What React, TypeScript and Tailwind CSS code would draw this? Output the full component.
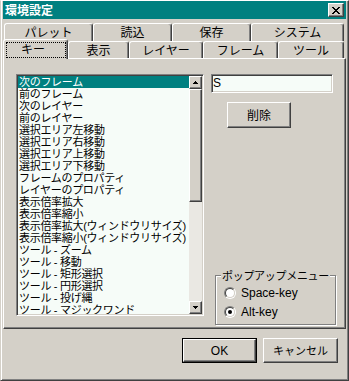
const raised =
  "border border-t-white border-l-white border-r-[#404040] border-b-[#404040] shadow-[inset_-1px_-1px_0_#808080] bg-[#d4d0c8]"
const sunken =
  "border border-t-[#808080] border-l-[#808080] border-r-white border-b-white shadow-[inset_1px_1px_0_#404040,inset_-1px_-1px_0_#d4d0c8] p-[1px]"

const items = [
  "次のフレーム",
  "前のフレーム",
  "次のレイヤー",
  "前のレイヤー",
  "選択エリア左移動",
  "選択エリア右移動",
  "選択エリア上移動",
  "選択エリア下移動",
  "フレームのプロパティ",
  "レイヤーのプロパティ",
  "表示倍率拡大",
  "表示倍率縮小",
  "表示倍率拡大(ウィンドウリサイズ)",
  "表示倍率縮小(ウィンドウリサイズ)",
  "ツール - ズーム",
  "ツール - 移動",
  "ツール - 矩形選択",
  "ツール - 円形選択",
  "ツール - 投げ縄",
  "ツール - マジックワンド",
]

const CloseGlyph = () => (
  <svg width="8" height="7" viewBox="0 0 8 7" shapeRendering="crispEdges">
    <rect x="0" y="0" width="2" height="1" />
    <rect x="6" y="0" width="2" height="1" />
    <rect x="1" y="1" width="2" height="1" />
    <rect x="5" y="1" width="2" height="1" />
    <rect x="2" y="2" width="4" height="1" />
    <rect x="3" y="3" width="2" height="1" />
    <rect x="2" y="4" width="4" height="1" />
    <rect x="1" y="5" width="2" height="1" />
    <rect x="5" y="5" width="2" height="1" />
    <rect x="0" y="6" width="2" height="1" />
    <rect x="6" y="6" width="2" height="1" />
  </svg>
)

const Arrow = ({ down }: { down?: boolean }) => (
  <svg width="5" height="3" viewBox="0 0 5 3" shapeRendering="crispEdges">
    {down ? (
      <>
        <rect x="0" y="0" width="5" height="1" />
        <rect x="1" y="1" width="3" height="1" />
        <rect x="2" y="2" width="1" height="1" />
      </>
    ) : (
      <>
        <rect x="2" y="0" width="1" height="1" />
        <rect x="1" y="1" width="3" height="1" />
        <rect x="0" y="2" width="5" height="1" />
      </>
    )}
  </svg>
)

const Radio = ({ checked }: { checked?: boolean }) => (
  <div className="w-[12px] h-[12px] rounded-full border border-t-[#808080] border-l-[#808080] border-r-white border-b-white">
    <div className="w-full h-full rounded-full border border-t-[#404040] border-l-[#404040] border-r-[#d4d0c8] border-b-[#d4d0c8] bg-white flex items-center justify-center">
      {checked && <div className="w-[4px] h-[4px] rounded-full bg-black" />}
    </div>
  </div>
)

const Tab = ({ label, w, h }: { label: string; w: string; h: string }) => (
  <div
    className={`${w} ${h} border-t border-l border-t-white border-l-white border-r border-r-[#404040] shadow-[inset_-1px_0_0_#808080] rounded-t-[3px] flex items-center justify-center text-[12px] leading-none pt-[1px]`}
  >
    {label}
  </div>
)

export default function App() {
  return (
    <div className="w-[349px] h-[381px] bg-[#d4d0c8] text-black font-['Liberation_Sans','Noto_Sans_CJK_JP',sans-serif] border border-l-[#d4d0c8] border-t-white border-r-[#404040] border-b-[#404040] shadow-[inset_1px_0_0_white,inset_-1px_-1px_0_#808080] pl-[2px] pr-[2px] pb-[2px] flex flex-col select-none">
      {/* title bar */}
      <div className="h-[18px] bg-[#008080] flex items-center justify-between pl-[2px] pr-[2px]">
        <span className="text-white font-bold text-[12px] leading-none font-['Noto_Sans_CJK_JP',sans-serif]">
          環境設定
        </span>
        <div className={`${raised} w-[16px] h-[14px] flex items-center justify-center`}>
          <CloseGlyph />
        </div>
      </div>

      {/* tabs */}
      <div className="mt-[4px] flex flex-col">
        <div className="flex pl-[1px] h-[18px]">
          <Tab label="パレット" w="w-[89px]" h="h-[18px]" />
          <Tab label="読込" w="w-[79px]" h="h-[18px]" />
          <Tab label="保存" w="w-[79px]" h="h-[18px]" />
          <Tab label="システム" w="w-[93px]" h="h-[18px]" />
        </div>
        <div className="flex items-end h-[17px]">
          <div className="relative z-10 -mb-[1px] w-[65px] h-[20px] bg-[#d4d0c8] border-t border-l border-t-white border-l-white border-r border-r-[#404040] shadow-[inset_-1px_0_0_#808080] rounded-t-[3px] pl-[2px] pr-[2px] pt-[2px] pb-[1px]">
            <div className="w-[60px] h-[16px] border border-dotted border-black flex items-center justify-center text-[12px] leading-none pr-[6px]">
              キー
            </div>
          </div>
          <Tab label="表示" w="w-[61px]" h="h-[17px]" />
          <Tab label="レイヤー" w="w-[74px]" h="h-[17px]" />
          <Tab label="フレーム" w="w-[75px]" h="h-[17px]" />
          <Tab label="ツール" w="w-[66px]" h="h-[17px]" />
        </div>
      </div>

      {/* panel */}
      <div className="h-[271px] border border-t-white border-l-white border-r-[#404040] border-b-[#404040] shadow-[inset_-1px_-1px_0_#808080] pt-[15px] pl-[12px] flex">
        <div className={`${sunken} w-[188px] h-[242px] bg-[#f6fcf8] flex`}>
          <div className="flex-1 overflow-hidden">
            {items.map((t, i) => (
              <div
                key={t}
                className={`h-[12px] leading-[12px] text-[11px] tracking-[-0.3px] pl-[1px] whitespace-nowrap ${
                  i === 0 ? "bg-[#008080] text-white" : ""
                }`}
              >
                {t}
              </div>
            ))}
          </div>
          <div className="w-[13px] flex flex-col bg-[#eae8e3]">
            <div className={`${raised} h-[13px] flex items-center justify-center`}>
              <Arrow />
            </div>
            <div className={`${raised} h-[113px]`} />
            <div className="flex-1" />
            <div className={`${raised} h-[13px] flex items-center justify-center`}>
              <Arrow down />
            </div>
          </div>
        </div>

        <div className="ml-[7px] flex flex-col">
          <div className={`${sunken} w-[122px] h-[19px] bg-[#f6fcf8] text-[12px] leading-[15px] pl-[1px]`}>
            S
          </div>
          <div
            className={`${raised} ml-[16px] mt-[9px] w-[64px] h-[26px] flex items-center justify-center text-[12px] font-['Noto_Sans_CJK_JP',sans-serif]`}
          >
            削除
          </div>
          <fieldset className="mt-auto mb-[3px] ml-[4px] w-[121px] border border-[#808080] shadow-[inset_1px_1px_0_white,1px_1px_0_white] pb-[3px]">
            <legend className="ml-[5px] px-[1px] text-[11px] leading-[12px] whitespace-nowrap tracking-[-0.3px] bg-[#d4d0c8] font-['Noto_Sans_CJK_JP',sans-serif]">
              ポップアップメニュー
            </legend>
            <div className="flex flex-col pl-[8px] pt-[2px]">
              <div className="h-[19px] flex items-center gap-[5px] text-[12px]">
                <Radio />
                <span>Space-key</span>
              </div>
              <div className="h-[19px] flex items-center gap-[5px] text-[12px]">
                <Radio checked />
                <span>Alt-key</span>
              </div>
            </div>
          </fieldset>
        </div>
      </div>

      {/* buttons */}
      <div className="mt-[9px] flex justify-end gap-[6px] pr-[8px]">
        <div className="w-[75px] h-[25px] border border-black">
          <div className={`${raised} w-full h-full flex items-center justify-center text-[12px]`}>
            OK
          </div>
        </div>
        <div
          className={`${raised} w-[75px] h-[25px] flex items-center justify-center text-[11px] font-['Noto_Sans_CJK_JP',sans-serif]`}
        >
          キャンセル
        </div>
      </div>
    </div>
  )
}
